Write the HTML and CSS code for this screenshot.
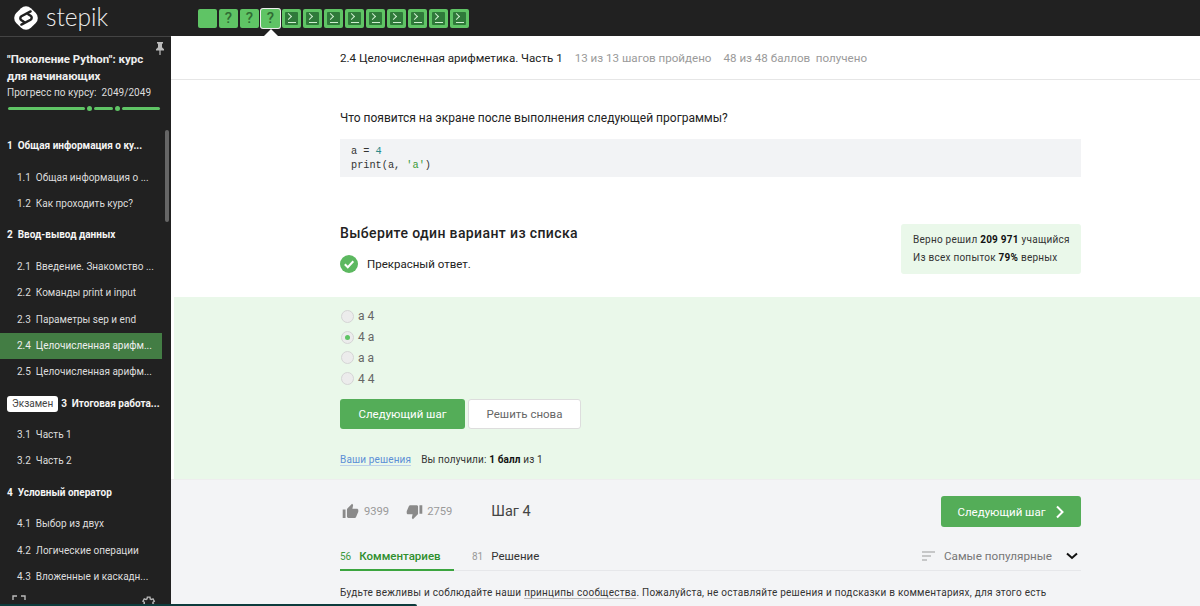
FILE: index.html
```html
<!DOCTYPE html>
<html lang="ru">
<head>
  <meta charset="UTF-8" />
  <meta name="viewport" content="width=device-width, initial-scale=1.0" />
  <title>Stepik</title>
  <link rel="stylesheet" href="styles.css">
</head>
<body>
  <header class="topbar">
    <a class="logo">
      <svg class="logo-mark" width="30" height="30" viewBox="0 0 26 26">
        <rect x="4" y="4" width="18" height="18" rx="6" fill="#fff" transform="rotate(45 13 13)" />
        <path d="M17 7.300 L9 11.500 a2 2 0 0 0 0 3.400 L10.800 16 M15.200 10 L17 11.100 a2 2 0 0 1 0 3.400 L9 18.700" fill="none" stroke="#212121" stroke-width="2.100" stroke-linecap="round" />
      </svg>
      <span class="logo-text">stepik</span>
    </a>
    <nav class="steps">
      <span class="step"></span>
      <span class="step">?</span>
      <span class="step">?</span>
      <span class="step step-active">?</span>
      <span class="step step-code"><i></i></span>
      <span class="step step-code"><i></i></span>
      <span class="step step-code"><i></i></span>
      <span class="step step-code"><i></i></span>
      <span class="step step-code"><i></i></span>
      <span class="step step-code"><i></i></span>
      <span class="step step-code"><i></i></span>
      <span class="step step-code"><i></i></span>
      <span class="step step-code"><i></i></span>
    </nav>
  </header>

  <div class="layout">
    <aside class="sidebar">
      <svg class="pin" width="10" height="13" viewBox="0 0 10 13">
        <path d="M2 0h6v1.200L7 2v3.200l2 2V8.400H5.600V13H4.400V8.400H1V7.200l2-2V2L2 1.200z" fill="#bbb" />
      </svg>
      <div class="course">
        <h1 class="course-title">"Поколение Python": курс для начинающих</h1>
        <p class="course-progress">Прогресс по курсу:&nbsp; 2049/2049</p>
        <div class="progress">
          <span class="bar bar-a"></span><span class="dot"></span>
          <span class="bar bar-b"></span><span class="dot"></span>
          <span class="bar bar-c"></span>
        </div>
      </div>
      <div class="toc">
        <div class="section">1&nbsp; Общая информация о ку...</div>
        <div class="lesson">1.1&nbsp; Общая информация о ...</div>
        <div class="lesson">1.2&nbsp; Как проходить курс?</div>
        <div class="section">2&nbsp; Ввод-вывод данных</div>
        <div class="lesson">2.1&nbsp; Введение. Знакомство ...</div>
        <div class="lesson">2.2&nbsp; Команды print и input</div>
        <div class="lesson">2.3&nbsp; Параметры sep и end</div>
        <div class="lesson lesson-active">2.4&nbsp; Целочисленная арифм...</div>
        <div class="lesson">2.5&nbsp; Целочисленная арифм...</div>
        <div class="section section-exam"><span class="exam">Экзамен</span>3&nbsp; Итоговая работа...</div>
        <div class="lesson">3.1&nbsp; Часть 1</div>
        <div class="lesson">3.2&nbsp; Часть 2</div>
        <div class="section">4&nbsp; Условный оператор</div>
        <div class="lesson">4.1&nbsp; Выбор из двух</div>
        <div class="lesson">4.2&nbsp; Логические операции</div>
        <div class="lesson">4.3&nbsp; Вложенные и каскадн...</div>
      </div>
      <div class="side-tools">
        <svg width="14" height="14" viewBox="0 0 14 14">
          <path d="M1 5V1h4M9 1h4v4M1 9v4h4M13 9v4H9" fill="none" stroke="#bbb" stroke-width="1.400" />
        </svg>
        <svg width="16" height="16" viewBox="0 0 24 24">
          <path d="M19.400 13a7.500 7.500 0 0 0 0-2l2.100-1.600-2-3.500-2.500 1a7.500 7.500 0 0 0-1.700-1L15 3.300h-4l-.4 2.600a7.500 7.500 0 0 0-1.700 1l-2.500-1-2 3.500L6.500 11a7.500 7.500 0 0 0 0 2l-2.100 1.600 2 3.500 2.500-1a7.500 7.500 0 0 0 1.700 1l.4 2.600h4l.4-2.600a7.500 7.500 0 0 0 1.700-1l2.500 1 2-3.500z" fill="none" stroke="#bbb" stroke-width="2" />
        </svg>
      </div>
      <span class="scroll-thumb"></span>
    </aside>

    <main class="main">
      <div class="lesson-head">
        <span class="lesson-name">2.4 Целочисленная арифметика. Часть 1</span>
        <span class="lesson-meta">13 из 13 шагов пройдено</span>
        <span class="lesson-meta">48 из 48 баллов &nbsp;получено</span>
      </div>

      <section class="question">
        <p class="question-text">Что появится на экране после выполнения следующей программы?</p>
        <pre class="code">a = <span class="code-num">4</span>
print(a, <span class="code-str">'a'</span>)</pre>
        <div class="task-row">
          <div>
            <h2 class="task-title">Выберите один вариант из списка</h2>
            <div class="verdict">
              <svg width="18" height="18" viewBox="0 0 18 18">
                <circle cx="9" cy="9" r="9" fill="#5cb860" />
                <path d="M4.800 9.300l3 3 5.500-6" fill="none" stroke="#fff" stroke-width="2" />
              </svg>
              <span>Прекрасный ответ.</span>
            </div>
          </div>
          <div class="stats">
            <p>Верно решил <b>209 971</b> учащийся</p>
            <p>Из всех попыток <b>79%</b> верных</p>
          </div>
        </div>
      </section>

      <section class="answer">
        <div class="option"><span class="radio"></span>а 4</div>
        <div class="option"><span class="radio radio-on"></span>4 а</div>
        <div class="option"><span class="radio"></span>а а</div>
        <div class="option"><span class="radio"></span>4 4</div>
        <div class="answer-actions">
          <button class="btn btn-green">Следующий шаг</button>
          <button class="btn btn-white">Решить снова</button>
        </div>
        <p class="answer-note"><a class="link">Ваши решения</a>Вы получили: <b>1 балл</b> из 1</p>
      </section>

      <section class="foot">
        <div class="foot-row">
          <svg class="thumb" width="17" height="17" viewBox="0 0 24 24">
            <path d="M1 21h4V9H1v12zm22-11c0-1.100-.9-2-2-2h-6.310l.95-4.570.03-.32c0-.41-.17-.79-.44-1.060L14.170 1 7.590 7.590C7.220 7.950 7 8.450 7 9v10c0 1.100.9 2 2 2h9c.83 0 1.540-.5 1.840-1.220l3.020-7.050c.09-.23.14-.47.14-.73v-2z" />
          </svg>
          <span class="count">9399</span>
          <svg class="thumb thumb-down" width="17" height="17" viewBox="0 0 24 24">
            <path d="M15 3H6c-.83 0-1.540.5-1.840 1.220l-3.020 7.050c-.09.23-.14.47-.14.73v2c0 1.100.9 2 2 2h6.310l-.95 4.570-.03.32c0 .41.17.79.44 1.060L9.830 23l6.590-6.590c.36-.36.58-.86.58-1.410V5c0-1.100-.9-2-2-2zm4 0v12h4V3h-4z" />
          </svg>
          <span class="count">2759</span>
          <span class="step-num">Шаг 4</span>
          <button class="btn btn-green btn-next">Следующий шаг
            <svg width="10" height="14" viewBox="0 0 10 14">
              <path d="M2 1.500L7.500 7 2 12.500" fill="none" stroke="#fff" stroke-width="2" />
            </svg>
          </button>
        </div>
        <div class="tabs">
          <div class="tab tab-on"><small>56</small>Комментариев</div>
          <div class="tab"><small>81</small>Решение</div>
          <div class="sort">
            <svg width="13" height="10" viewBox="0 0 13 10">
              <path d="M0 1h13M0 5h9M0 9h5" stroke="#999" stroke-width="1.200" />
            </svg>
            <span>Самые популярные</span>
            <svg class="sort-arrow" width="12" height="8" viewBox="0 0 12 8">
              <path d="M1 1.500l5 4.500 5-4.500" fill="none" stroke="#111" stroke-width="2" />
            </svg>
          </div>
        </div>
        <p class="rules">Будьте вежливы и соблюдайте наши <a>принципы сообщества</a>. Пожалуйста, не оставляйте решения и подсказки в комментариях, для этого есть</p>
      </section>
    </main>
  </div>
  <span class="bottom-strip"></span>
</body>
</html>
```

FILE: styles.css
```css
* {
  margin: 0;
  padding: 0;
  box-sizing: border-box;
}

html, body {
  height: 100%;
  overflow: hidden;
}

body {
  font-family: Roboto, "Noto Sans", sans-serif;
  background: #fff;
  color: #222;
  display: flex;
  flex-direction: column;
}

.topbar {
  display: flex;
  align-items: center;
  height: 36px;
  flex: none;
  background: #212121;
  position: relative;
}

.logo {
  display: flex;
  align-items: center;
  width: 198px;
  padding-left: 11px;
  gap: 5px;
  color: #fff;
}

.logo-text {
  font-family: Lato, sans-serif;
  font-size: 24.500px;
  font-weight: 300;
  line-height: 30px;
  margin-top: -3px;
  color: #eee;
}

.steps {
  display: flex;
  gap: 2px;
  margin-top: 1px;
}

.step {
  width: 19px;
  height: 19px;
  border-radius: 2px;
  background: #5fc465;
  color: #2f6b33;
  font-size: 15px;
  font-weight: 500;
  text-align: center;
  line-height: 19px;
  display: flex;
  align-items: center;
  justify-content: center;
  position: relative;
}

.step-active {
  box-shadow: 0 0 0 1px #eee;
}

.step-active::after {
  content: "";
  position: absolute;
  left: 3px;
  top: 20px;
  border-left: 7px solid transparent;
  border-right: 7px solid transparent;
  border-bottom: 7px solid #fff;
}

.step-code i {
  display: block;
  width: 13px;
  height: 13px;
  border-radius: 1px;
  background: #2f7a3a;
  position: relative;
}

.step-code i::before {
  content: "";
  position: absolute;
  left: 1px;
  top: 2px;
  width: 4px;
  height: 4px;
  border-top: 1px solid #cfeed0;
  border-right: 1px solid #cfeed0;
  transform: rotate(45deg);
}

.step-code i::after {
  content: "";
  position: absolute;
  left: 3px;
  bottom: 2px;
  width: 8px;
  height: 1px;
  background: #cfeed0;
}

.layout {
  flex: 1;
  display: flex;
  min-height: 0;
}

.sidebar {
  width: 171px;
  flex: none;
  background: #212121;
  border-top: 1px solid #444;
  position: relative;
  overflow: hidden;
  color: #eee;
}

.pin {
  position: absolute;
  right: 6px;
  top: 5px;
}

.course {
  padding: 14px 8px 0 7px;
  height: 91px;
}

.course-title {
  font-size: 11.500px;
  font-weight: 700;
  line-height: 17px;
  width: 150px;
}

.course-progress {
  font-size: 10px;
  line-height: 16px;
  letter-spacing: 0.05px;
  color: #ddd;
}

.progress {
  display: flex;
  align-items: center;
  gap: 2px;
  margin-top: 5px;
  width: 154px;
  margin-left: 1px;
}

.bar {
  height: 3px;
  border-radius: 2px;
  background: #5fc465;
}

.bar-a { width: 77px; }
.bar-b { width: 19px; }
.bar-c { width: 38px; }

.dot {
  width: 5px;
  height: 5px;
  border-radius: 50%;
  background: #5fc465;
}

.section {
  height: 36.700px;
  line-height: 36px;
  padding-left: 7px;
  font-size: 10px;
  font-weight: 700;
  color: #f5f5f5;
  white-space: nowrap;
}

.section-exam {
  display: flex;
  align-items: center;
}

.exam {
  background: #fff;
  color: #444;
  font-weight: 400;
  border-radius: 3px;
  height: 16px;
  line-height: 16px;
  padding: 0 5px;
  margin-right: 3px;
}

.lesson {
  height: 26.300px;
  line-height: 26px;
  width: 162px;
  padding-left: 17px;
  font-size: 10px;
  color: #ddd;
  white-space: nowrap;
}

.lesson-active {
  background: #437d44;
  color: #eee;
}

.side-tools {
  display: flex;
  justify-content: space-between;
  padding: 5px 15px 0 12px;
}

.scroll-thumb {
  position: absolute;
  left: 165px;
  top: 93px;
  width: 4px;
  height: 92px;
  border-radius: 2px;
  background: #666;
}

.main {
  flex: 1;
  min-width: 0;
  display: flex;
  flex-direction: column;
}

.lesson-head {
  height: 44px;
  padding: 0 119px 0 169px;
  border-bottom: 1px solid #e6e6e6;
  display: flex;
  align-items: center;
  gap: 12px;
  font-size: 11.600px;
  flex: none;
}

.lesson-meta {
  color: #9a9a9a;
}

.question {
  padding: 30px 119px 0 169px;
  height: 217px;
  flex: none;
}

.question-text {
  font-size: 12px;
  line-height: 16px;
}

.code {
  margin-top: 13px;
  height: 38px;
  padding: 5px 11px;
  background: #f2f3f5;
  font-family: "Liberation Mono", monospace;
  font-size: 10.250px;
  line-height: 14px;
  color: #333;
}

.code-num { color: #2a8a8a; }
.code-str { color: #3a9a3a; }

.task-row {
  display: flex;
  justify-content: space-between;
  margin-top: 46px;
}

.task-title {
  font-size: 14px;
  font-weight: 500;
  line-height: 20px;
  letter-spacing: 0.38px;
}

.verdict {
  display: flex;
  align-items: center;
  gap: 9px;
  margin-top: 12px;
  font-size: 11.500px;
}

.stats {
  width: 180px;
  height: 50px;
  margin-top: 1px;
  padding: 7px 12px;
  border-radius: 3px;
  background: #eaf8ea;
  font-size: 10px;
  line-height: 18px;
  letter-spacing: 0.25px;
  color: #333;
  white-space: nowrap;
}

.stats b { color: #111; }

.answer {
  margin-left: 3px;
  height: 182px;
  padding: 9px 119px 0 166px;
  background: #eaf8ea;
  flex: none;
}

.option {
  display: flex;
  align-items: center;
  height: 20.800px;
  gap: 4px;
  font-size: 12px;
  color: #666;
}

.radio {
  width: 13px;
  height: 13px;
  border-radius: 50%;
  border: 1px solid #d5d5d5;
  background: #ececec;
  position: relative;
  margin-left: 1px;
}

.radio-on::after {
  content: "";
  position: absolute;
  left: 3px;
  top: 3px;
  width: 5px;
  height: 5px;
  border-radius: 50%;
  background: #5fc465;
}

.answer-actions {
  display: flex;
  gap: 3px;
  margin-top: 10px;
}

.btn {
  font-family: inherit;
  font-size: 11.500px;
  height: 30px;
  border-radius: 3px;
  border: none;
}

.btn-green {
  width: 125px;
  background: #54ad58;
  color: #fff;
}

.btn-white {
  width: 113px;
  background: #fff;
  border: 1px solid #ddd;
  color: #666;
}

.answer-note {
  margin-top: 23px;
  font-size: 10px;
  line-height: 16px;
  letter-spacing: 0.15px;
  color: #333;
}

.answer-note b { color: #111; }

.link {
  color: #5c8fd6;
  border-bottom: 1px solid #bcd0ea;
  margin-right: 10px;
}

.foot {
  flex: 1;
  padding: 16px 119px 0 169px;
  background: #f3f4f6;
  border-top: 1px solid #eee;
  min-height: 0;
}

.foot-row {
  display: flex;
  align-items: center;
  height: 31px;
}

.thumb {
  fill: #8a8a8a;
  margin-right: 5px;
  margin-left: 2px;
}

.thumb-down {
  margin-left: 17px;
  margin-right: 4px;
}

.count {
  font-size: 11.200px;
  color: #999;
}

.step-num {
  margin-left: 39px;
  font-size: 14.500px;
  color: #444;
}

.btn-next {
  margin-left: auto;
  width: 140px;
  height: 31px;
  display: flex;
  align-items: center;
  justify-content: center;
  gap: 9px;
}

.tabs {
  display: flex;
  align-items: center;
  height: 29px;
  margin-top: 15px;
  border-bottom: 1px solid #e6e7ea;
  font-size: 11.500px;
}

.tab {
  height: 29px;
  line-height: 28px;
  width: 114px;
  margin-right: 18px;
  color: #333;
  white-space: nowrap;
}

.tab small {
  font-size: 10px;
  color: #999;
  margin-right: 8px;
}

.tab-on {
  color: #2f8f2f;
  font-weight: 500;
  border-bottom: 2px solid #3ba53f;
}

.tab-on small {
  color: #3b9a3f;
  font-weight: 400;
}

.sort {
  margin-left: auto;
  display: flex;
  align-items: center;
  color: #777;
  gap: 9px;
}

.sort span {
  font-size: 11.700px;
}

.sort-arrow {
  margin-left: 5px;
  margin-right: 3px;
}

.rules {
  margin-top: 14px;
  font-size: 10px;
  line-height: 16px;
  letter-spacing: 0.25px;
  color: #333;
  white-space: nowrap;
}

.rules a {
  border-bottom: 1px solid #bbb;
}

.bottom-strip {
  position: absolute;
  left: 0;
  bottom: 0;
  width: 417px;
  height: 2px;
  background: #0c3b3c;
  border-radius: 0 2px 0 0;
}
```
